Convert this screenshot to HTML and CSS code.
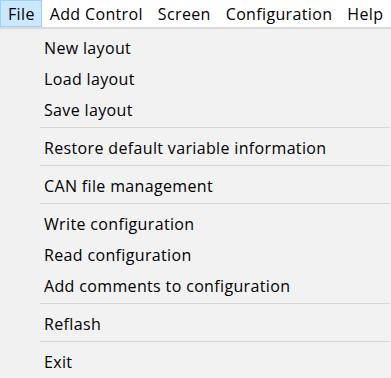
FILE: index.html
```html
<!DOCTYPE html>
<html lang="en">
<head>
    <meta charset="UTF-8">
    <meta name="viewport" content="width=device-width, initial-scale=1.0">
    <title>File menu</title>
    <link rel="stylesheet" href="styles.css">
</head>
<body>
    <div class="menubar">
        <div class="menubar-item active">File</div>
        <div class="menubar-item">Add Control</div>
        <div class="menubar-item">Screen</div>
        <div class="menubar-item">Configuration</div>
        <div class="menubar-item">Help</div>
    </div>

    <div class="dropdown">
        <div class="menu-item">New layout</div>
        <div class="menu-item">Load layout</div>
        <div class="menu-item">Save layout</div>
        <div class="separator"></div>
        <div class="menu-item">Restore default variable information</div>
        <div class="separator"></div>
        <div class="menu-item">CAN file management</div>
        <div class="separator"></div>
        <div class="menu-item">Write configuration</div>
        <div class="menu-item">Read configuration</div>
        <div class="menu-item">Add comments to configuration</div>
        <div class="separator"></div>
        <div class="menu-item">Reflash</div>
        <div class="separator"></div>
        <div class="menu-item">Exit</div>
    </div>
</body>
</html>
```

FILE: styles.css
```css
* {
    margin: 0;
    padding: 0;
    box-sizing: border-box;
}

body {
    font-family: 'Open Sans', 'Noto Sans', sans-serif;
    font-size: 16px;
    letter-spacing: 0.35px;
    color: #000;
    background-color: #f2f2f2;
    width: 391px;
    height: 378px;
    overflow: hidden;
}

.menubar {
    display: flex;
    height: 29px;
    background-color: #fff;
    border-bottom: 2px solid #dadada;
}

.menubar-item {
    height: 27px;
    line-height: 26px;
    padding: 0 6px 0 7px;
    border: 1px solid transparent;
    white-space: nowrap;
}

.menubar-item.active {
    background-color: #cce8ff;
    border-color: #99d1ff;
}

.dropdown {
    padding-top: 2px;
    padding-left: 40px;
    background: linear-gradient(to right, #f0f0f0 40px, #f2f2f2 40px);
}

.menu-item {
    height: 31px;
    padding-top: 2px;
    padding-left: 4px;
    line-height: 30px;
    white-space: nowrap;
}

.separator {
    height: 7px;
    padding: 3px 2px 3px 0;
}

.separator::after {
    content: '';
    display: block;
    height: 1px;
    background-color: #d7d7d7;
}
```
